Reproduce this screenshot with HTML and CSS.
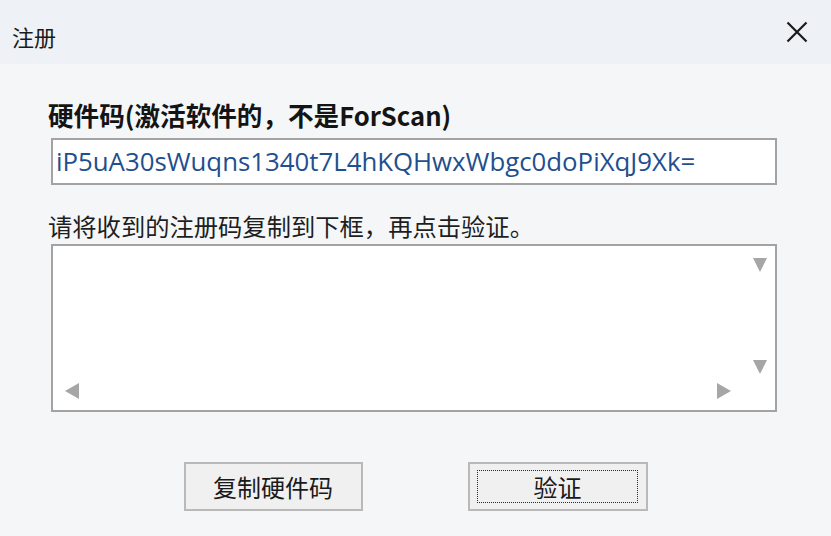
FILE: index.html
```html
<!DOCTYPE html>
<html lang="zh-CN">
<head>
<meta charset="utf-8">
<title>注册</title>
<link rel="stylesheet" href="styles.css">
</head>
<body>
<div class="window">
  <div class="titlebar">
    <span class="title">注册</span>
    <svg class="close" width="22" height="22" viewBox="0 0 22 22" aria-label="关闭">
      <path d="M1.5 1.5 L20.5 20.5 M20.5 1.5 L1.5 20.5" stroke="#1a1a1a" stroke-width="2.2" fill="none"/>
    </svg>
  </div>
  <div class="content">
    <div class="label">硬件码(激活软件的，不是ForScan)</div>
    <div class="field">iP5uA30sWuqns1340t7L4hKQHwxWbgc0doPiXqJ9Xk=</div>
    <div class="hint">请将收到的注册码复制到下框，再点击验证。</div>
    <div class="memo">
      <span class="arrow down up-pos"></span>
      <span class="arrow down down-pos"></span>
      <span class="arrow left"></span>
      <span class="arrow right"></span>
    </div>
    <div class="buttons">
      <div class="btn">复制硬件码</div>
      <div class="btn focused"><span class="focus">验证</span></div>
    </div>
  </div>
</div>
</body>
</html>
```

FILE: styles.css
```css
html, body {
  margin: 0;
  padding: 0;
}
body {
  width: 831px;
  height: 536px;
  overflow: hidden;
  background: #f5f6f8;
  font-family: "Noto Sans CJK SC", "Noto Sans", sans-serif;
  color: #1a1a1a;
}
.window {
  display: flex;
  flex-direction: column;
  height: 536px;
}
.titlebar {
  height: 64px;
  background: #eef1f5;
  display: flex;
  align-items: center;
  justify-content: space-between;
  padding: 0 23px 0 12px;
}
.title {
  font-size: 22px;
  line-height: 26px;
  margin-top: 8px;
}
.close {
  display: block;
}
.content {
  padding: 36px 54px 0 48px;
  display: flex;
  flex-direction: column;
}
.label {
  font-size: 25.6px;
  line-height: 30px;
  font-weight: bold;
  color: #141414;
  white-space: nowrap;
}
.field {
  margin: 8px 0 0 3px;
  height: 43px;
  border: 2px solid #a3a3a3;
  background: #ffffff;
  box-sizing: content-box;
  font-family: "Open Sans", "Noto Sans", sans-serif;
  font-size: 25.8px;
  line-height: 43px;
  color: #1f4f8e;
  padding-left: 3px;
  white-space: nowrap;
  overflow: hidden;
}
.hint {
  margin-top: 26px;
  font-size: 24.3px;
  line-height: 30px;
  color: #1e1e1e;
  white-space: nowrap;
}
.memo {
  position: relative;
  margin: 3px 0 0 3px;
  height: 164px;
  border: 2px solid #a3a3a3;
  background: #ffffff;
}
.arrow {
  position: absolute;
  width: 0;
  height: 0;
}
.arrow.down {
  border-left: 7px solid transparent;
  border-right: 7px solid transparent;
  border-top: 14px solid #a6a6a6;
  left: 700px;
}
.up-pos { top: 12px; }
.down-pos { top: 114px; }
.arrow.left {
  border-top: 8px solid transparent;
  border-bottom: 8px solid transparent;
  border-right: 14px solid #a6a6a6;
  left: 12px;
  top: 137px;
}
.arrow.right {
  border-top: 8px solid transparent;
  border-bottom: 8px solid transparent;
  border-left: 14px solid #a6a6a6;
  left: 664px;
  top: 137px;
}
.buttons {
  margin-top: 50px;
  display: flex;
  justify-content: center;
  gap: 105px;
  margin-left: -48px;
  margin-right: -54px;
}
.btn {
  width: 175px;
  height: 45px;
  border: 2px solid #b9b9b9;
  background: #f0f0f0;
  display: flex;
  align-items: center;
  justify-content: center;
  font-size: 24px;
  color: #1a1a1a;
}
.btn.focused {
  width: 176px;
}
.focus {
  box-sizing: border-box;
  width: 161px;
  height: 33px;
  border: 1px dotted #2a2a2a;
  display: flex;
  align-items: center;
  justify-content: center;
  line-height: 1;
}
```
